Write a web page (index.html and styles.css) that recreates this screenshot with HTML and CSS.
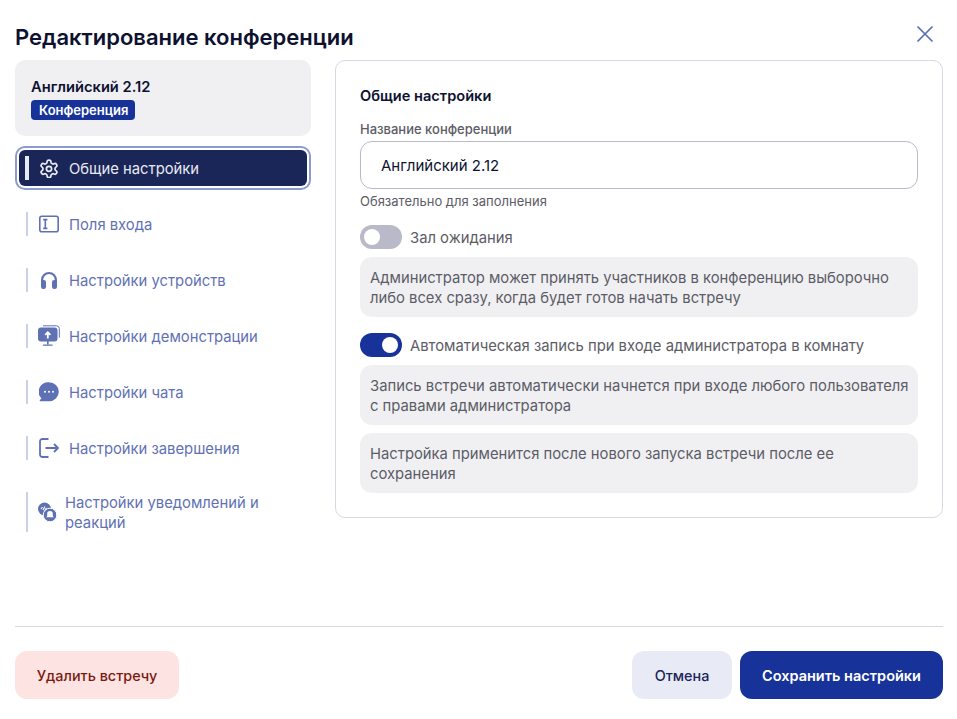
FILE: index.html
```html
<!DOCTYPE html>
<html lang="ru">

<head>
    <meta charset="UTF-8">
    <meta name="viewport" content="width=device-width, initial-scale=1.0">
    <title>Редактирование конференции</title>
    <link rel="stylesheet" href="styles.css">
</head>

<body>
    <div class="modal">
        <header class="modal-header">
            <h1 class="modal-title">Редактирование конференции</h1>
            <button class="close-button" type="button" aria-label="Закрыть">
                <svg width="20" height="20" viewBox="0 0 20 20" fill="none" stroke="currentColor" stroke-width="1.7">
                    <path d="M2.5 2.5l15 15M17.5 2.5l-15 15" />
                </svg>
            </button>
        </header>

        <main class="modal-main">
            <aside class="sidebar">
                <div class="conf-card">
                    <div class="conf-name">Английский 2.12</div>
                    <span class="conf-badge">Конференция</span>
                </div>
                <nav class="nav">
                    <a class="nav-item nav-item-active">
                        <span class="nav-label">
                            <svg class="nav-icon" viewBox="0.5 -0.5 23 23" fill="none" stroke="currentColor" stroke-width="2">
                                <path d="M12.22 2h-.44a2 2 0 0 0-2 2v.18a2 2 0 0 1-1 1.73l-.43.25a2 2 0 0 1-2 0l-.15-.08a2 2 0 0 0-2.73.73l-.22.38a2 2 0 0 0 .73 2.73l.15.1a2 2 0 0 1 1 1.72v.51a2 2 0 0 1-1 1.74l-.15.09a2 2 0 0 0-.73 2.73l.22.38a2 2 0 0 0 2.73.73l.15-.08a2 2 0 0 1 2 0l.43.25a2 2 0 0 1 1 1.73V20a2 2 0 0 0 2 2h.44a2 2 0 0 0 2-2v-.18a2 2 0 0 1 1-1.73l.43-.25a2 2 0 0 1 2 0l.15.08a2 2 0 0 0 2.73-.73l.22-.39a2 2 0 0 0-.73-2.73l-.15-.08a2 2 0 0 1-1-1.74v-.5a2 2 0 0 1 1-1.74l.15-.09a2 2 0 0 0 .73-2.73l-.22-.38a2 2 0 0 0-2.73-.73l-.15.08a2 2 0 0 1-2 0l-.43-.25a2 2 0 0 1-1-1.73V4a2 2 0 0 0-2-2z" />
                                <circle cx="12" cy="12" r="3" />
                            </svg>
                            <span class="nav-text">Общие настройки</span>
                        </span>
                    </a>
                    <a class="nav-item">
                        <span class="nav-label">
                            <svg class="nav-icon" viewBox="0 0 20 20" fill="none" stroke="currentColor" stroke-width="1.6">
                                <rect x="0.8" y="2.3" width="18.4" height="15.4" rx="2" />
                                <path d="M4.2 5.6h4.2M4.2 14.4h4.2M6.3 5.6v8.8" />
                            </svg>
                            <span class="nav-text">Поля входа</span>
                        </span>
                    </a>
                    <a class="nav-item">
                        <span class="nav-label">
                            <svg class="nav-icon" viewBox="0 0 20 20" fill="currentColor">
                                <path d="M3.1 12V9.9a6.9 6.9 0 0 1 13.8 0V12" fill="none" stroke="currentColor" stroke-width="2.2" />
                                <rect x="2" y="10" width="5" height="9" rx="2.2" />
                                <rect x="13" y="10" width="5" height="9" rx="2.2" />
                            </svg>
                            <span class="nav-text">Настройки устройств</span>
                        </span>
                    </a>
                    <a class="nav-item">
                        <span class="nav-label">
                            <svg class="nav-icon nav-icon-wide" viewBox="0 0 22 22" fill="currentColor">
                                <path d="M5 0.8h13.5a2.8 2.8 0 0 1 2.8 2.8v9" fill="none" stroke="currentColor" stroke-width="1" />
                                <rect x="0" y="2.6" width="19.5" height="14" rx="3" />
                                <rect x="9" y="16" width="1.6" height="3.5" />
                                <rect x="4.8" y="19.4" width="10" height="1.4" rx="0.7" />
                                <path d="M9.8 13.5V7.5M7.2 9.8l2.6-2.6 2.6 2.6" fill="none" stroke="#fff" stroke-width="1.8" />
                            </svg>
                            <span class="nav-text">Настройки демонстрации</span>
                        </span>
                    </a>
                    <a class="nav-item">
                        <span class="nav-label">
                            <svg class="nav-icon" viewBox="0 0 20 20" fill="currentColor">
                                <path d="M10 0.2a9.8 9.5 0 0 1 0 19H1.2a0.6 0.6 0 0 1-0.4-1l1.6-1.9A9.8 9.5 0 0 1 10 0.2z" />
                                <circle cx="6" cy="9.8" r="1" fill="#fff" />
                                <circle cx="10" cy="9.8" r="1" fill="#fff" />
                                <circle cx="14" cy="9.8" r="1" fill="#fff" />
                            </svg>
                            <span class="nav-text">Настройки чата</span>
                        </span>
                    </a>
                    <a class="nav-item">
                        <span class="nav-label">
                            <svg class="nav-icon" viewBox="0 0 20 20" fill="none" stroke="currentColor" stroke-width="1.8">
                                <path d="M9.5 1H3.5a2.5 2.5 0 0 0-2.5 2.5v13A2.5 2.5 0 0 0 3.5 19h6" />
                                <path d="M6.5 10h12.5M15 6l4 4-4 4" />
                            </svg>
                            <span class="nav-text">Настройки завершения</span>
                        </span>
                    </a>
                    <a class="nav-item nav-item-long">
                        <span class="nav-label">
                            <svg class="nav-icon" viewBox="0 0 20 20" fill="currentColor">
                                <circle cx="7.5" cy="7" r="6.5" />
                                <path d="M4 7l1.5-2M6 8l2-3.5M7.5 9l2-3" stroke="#fff" stroke-width="1.1" />
                                <circle cx="13" cy="13" r="6.8" stroke="#fff" stroke-width="1" />
                                <path d="M13 9a2.8 2.8 0 0 1 2.8 2.8v2.2l1 1.2H9.2l1-1.2v-2.2A2.8 2.8 0 0 1 13 9z" fill="#fff" />
                            </svg>
                            <span class="nav-text">Настройки уведомлений и реакций</span>
                        </span>
                    </a>
                </nav>
            </aside>

            <section class="panel">
                <h2 class="panel-title">Общие настройки</h2>
                <label class="field-label" for="conf-name">Название конференции</label>
                <input class="field-input" id="conf-name" type="text" value="Английский 2.12">
                <div class="field-hint">Обязательно для заполнения</div>

                <div class="toggle-row">
                    <span class="toggle"></span>
                    Зал ожидания
                </div>
                <p class="info-box">Администратор может принять участников в конференцию выборочно либо всех сразу, когда будет готов начать встречу</p>

                <div class="toggle-row">
                    <span class="toggle toggle-on"></span>
                    Автоматическая запись при входе администратора в комнату
                </div>
                <p class="info-box">Запись встречи автоматически начнется при входе любого пользователя с правами администратора</p>
                <p class="info-box">Настройка применится после нового запуска встречи после ее сохранения</p>
            </section>
        </main>

        <footer class="modal-footer">
            <button class="btn btn-danger" type="button">Удалить встречу</button>
            <div class="footer-right">
                <button class="btn btn-cancel" type="button">Отмена</button>
                <button class="btn btn-primary" type="button">Сохранить настройки</button>
            </div>
        </footer>
    </div>
</body>

</html>
```

FILE: styles.css
```css
:root {
    font-family: 'Inter', 'Noto Sans', sans-serif;
    color: #0e1230;
    background-color: #fff;
}

html,
body {
    margin: 0;
    height: 100%;
}

.modal {
    height: 719px;
    box-sizing: border-box;
    padding: 0 14px 20px 15px;
    display: flex;
    flex-direction: column;
}

.modal-header {
    height: 60px;
    display: flex;
    align-items: flex-start;
    justify-content: space-between;
}

.modal-title {
    margin: 23px 0 0;
    font-size: 22px;
    line-height: 28px;
    font-weight: 600;
}

.close-button {
    width: 20px;
    height: 20px;
    margin: 24px 8px 0 0;
    padding: 0;
    border: 0;
    background: none;
    color: #5a6fb8;
}

.modal-main {
    flex: 1;
    display: flex;
    align-items: flex-start;
    gap: 24px;
}

.sidebar {
    width: 296px;
    flex-shrink: 0;
}

.conf-card {
    height: 76px;
    box-sizing: border-box;
    padding: 17px 16px 16px;
    border-radius: 10px;
    background-color: #f0f0f3;
}

.conf-name {
    font-size: 14.7px;
    line-height: 20px;
    font-weight: 600;
}

.conf-badge {
    display: inline-block;
    margin-top: 3px;
    padding: 0 7px 0 8px;
    border-radius: 4px;
    background-color: #17339a;
    color: #fff;
    font-size: 13px;
    line-height: 20px;
    font-weight: 600;
}

.nav {
    display: flex;
    flex-direction: column;
    gap: 20px;
    margin: 14px 4px 0;
}

.nav-item {
    min-height: 24px;
    padding: 6px 6px 6px 7px;
    color: #5f71b5;
    font-size: 14.8px;
    line-height: 20px;
    font-weight: 400;
}

.nav-label {
    min-height: 24px;
    box-sizing: border-box;
    padding-left: 11px;
    border-left: 2px solid #c9d0e8;
    display: flex;
    align-items: center;
    gap: 10px;
}

.nav-text {
    padding-top: 1px;
    margin-bottom: -1px;
}

.nav-item-active {
    border-radius: 6px;
    background-color: #1a2657;
    color: #e8eaf6;
    outline: 2px solid #8a9bd0;
    outline-offset: 2px;
    padding-left: 6px;
}

.nav-item-active .nav-label {
    border-left: 4px solid #e8eaf6;
    padding-left: 10px;
}

.nav-item-long .nav-label {
    gap: 8px;
    padding-left: 9px;
}

.nav-icon {
    width: 20px;
    height: 20px;
    flex-shrink: 0;
}

.nav-icon-wide {
    width: 22px;
    height: 22px;
    margin: 0 -1px 0 -1px;
}

.panel {
    flex: 1;
    box-sizing: border-box;
    height: 458px;
    padding: 24px;
    border: 1px solid #d8d8e4;
    border-radius: 10px;
}

.panel-title {
    margin: 0;
    font-size: 14.6px;
    line-height: 22px;
    font-weight: 600;
}

.field-label {
    display: block;
    margin-top: 13px;
    color: #5c5c66;
    font-size: 13px;
    line-height: 18px;
    font-weight: 500;
}

.field-input {
    display: block;
    width: 100%;
    height: 48px;
    box-sizing: border-box;
    margin-top: 3px;
    padding: 0 20px;
    border: 1px solid #b9b9c9;
    border-radius: 12px;
    color: #0e1230;
    font-family: inherit;
    font-size: 15px;
    font-weight: 400;
}

.field-hint {
    margin-top: 4px;
    color: #5c5c66;
    font-size: 13px;
    line-height: 16px;
}

.toggle-row {
    height: 24px;
    margin-top: 16px;
    display: flex;
    align-items: flex-start;
    gap: 8px;
    color: #5c5c66;
    font-size: 14.8px;
    line-height: 26px;
    font-weight: 400;
}

.toggle {
    position: relative;
    width: 42px;
    height: 24px;
    border-radius: 12px;
    background-color: #b9b9c9;
}

.toggle::after {
    content: "";
    position: absolute;
    top: 4px;
    left: 4px;
    width: 16px;
    height: 16px;
    border-radius: 50%;
    background-color: #fff;
}

.toggle-on {
    background-color: #17339a;
}

.toggle-on::after {
    left: 22px;
}

.info-box {
    margin: 8px 0 0;
    padding: 11px 6px 9px 10px;
    border-radius: 12px;
    background-color: #f0f0f3;
    color: #5c5c66;
    font-size: 14.8px;
    line-height: 20px;
    font-weight: 400;
}

.modal-footer {
    padding-top: 24px;
    border-top: 1px solid #d8d8e4;
    display: flex;
    justify-content: space-between;
}

.footer-right {
    display: flex;
    gap: 8px;
}

.btn {
    height: 48px;
    padding: 0;
    border: 0;
    border-radius: 12px;
    font-family: inherit;
    font-size: 14.4px;
    font-weight: 500;
}

.btn-danger {
    width: 164px;
    background-color: #fde4e2;
    color: #7a1a10;
}

.btn-cancel {
    width: 100px;
    background-color: #e8eaf6;
    color: #1a2657;
}

.btn-primary {
    width: 203px;
    background-color: #17339a;
    color: #fff;
    font-size: 14.5px;
    font-weight: 600;
}
```
